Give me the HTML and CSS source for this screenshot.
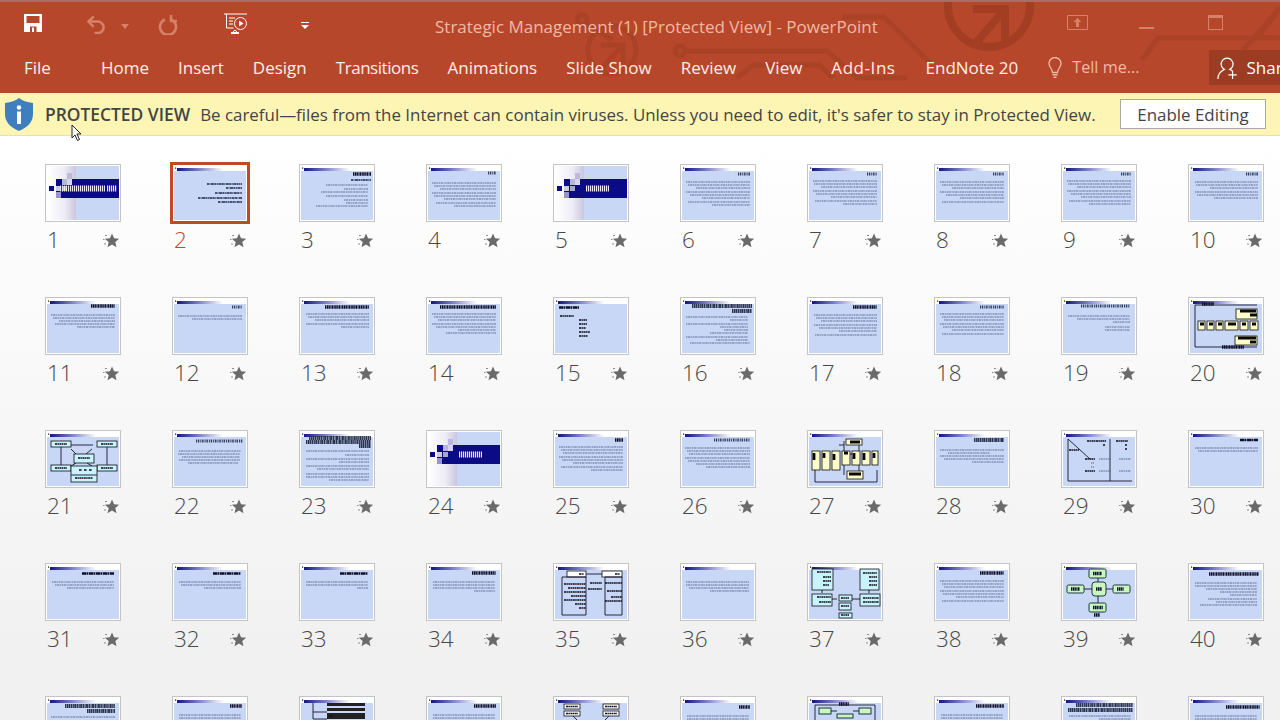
FILE: index.html
```html
<!DOCTYPE html>
<html lang="en">
<head>
<meta charset="utf-8">
<title>Strategic Management (1) [Protected View] - PowerPoint</title>
<link rel="stylesheet" href="styles.css">
</head>
<body>
<svg class="defs" width="0" height="0" aria-hidden="true">
  <defs>
    <linearGradient id="bar"><stop offset="0" stop-color="#14148a"/><stop offset=".42" stop-color="#6f73c0"/><stop offset="1" stop-color="#fff"/></linearGradient>
    <linearGradient id="side"><stop offset="0" stop-color="#fff"/><stop offset=".6" stop-color="#eeecf6"/><stop offset="1" stop-color="#c9c6de"/></linearGradient>
    <symbol id="bg" viewBox="0 0 72 54">
      <rect width="72" height="54" fill="#c9d7f6"/>
      <rect width="72" height="5" fill="#fff"/>
      <rect x="3" y="2" width="46" height="3" fill="url(#bar)"/>
      <rect x="1" y="1.500" width="1.200" height="1.200" fill="#112"/>
    </symbol>
    <symbol id="ts" viewBox="0 0 72 54">
      <rect width="72" height="54" fill="#c9d7f6"/>
      <rect width="29" height="54" fill="url(#side)"/>
      <rect x="9" y="13" width="63" height="19" fill="#0b0b86"/>
      <rect x="20" y="7" width="5" height="6" fill="#bdb8df"/>
      <rect x="15" y="13" width="5" height="6" fill="#b9b4dc"/>
      <rect x="20" y="13" width="5" height="6" fill="#d8d4ee"/>
      <rect x="2" y="20" width="5" height="5" fill="#0b0b86"/>
      <rect x="9" y="20" width="5" height="5" fill="#cfcae8"/>
      <rect x="15" y="20" width="5" height="5" fill="#a9a4d4"/>
      <rect x="9" y="26" width="5" height="6" fill="#9994cc"/>
    </symbol>
    <symbol id="star" viewBox="0 0 17 15">
      <path fill="#6a6a6a" d="M9 .4l2.050 4.750 5.150.5-3.900 3.450 1.200 5.050L9 11.500l-4.500 2.650 1.200-5.050-3.900-3.450 5.150-.5z"/>
      <path stroke="#8c8c8c" stroke-width="1" d="M2 2.500h2M0 6.500h1.500M1 11h2"/>
    </symbol>
  </defs>
</svg>
<div class="app">
  <header class="ribbon">
    <svg class="deco" viewBox="0 0 1280 93" aria-hidden="true">
      <circle cx="612" cy="50" r="24"/>
      <path d="M601 45h22v22M623 45l-22 24"/>
      <circle cx="582" cy="20" r="5"/>
      <path d="M586 24l26 16"/>
      <circle cx="680" cy="51" r="5"/>
      <path d="M685 51h142l30 27h50M737 78l16-13h67l13 13"/>
      <path d="M842 17h42l46 46"/>
      <circle class="big" cx="989" cy="6" r="41"/>
      <path class="big" d="M973 9h32v31M1005 9l-30 35"/>
      <path d="M1142 60l16-22h122M1243 50l37-42M1258 37l22-28"/>
    </svg>
    <div class="titlebar">
      <svg class="qat save" viewBox="0 0 20 20" aria-hidden="true"><path fill="#fff" d="M1 1h18v18H1z"/><path fill="#b7472a" d="M3.500 3h13v7h-13zM7 13.500h6.500V19H7z"/><path fill="#fff" d="M9 14.500h2V19H9z"/></svg>
      <svg class="qat undo" viewBox="0 0 22 20" aria-hidden="true"><path fill="none" stroke="#d58269" stroke-width="2.600" d="M8 2L2.500 7.500 8 13M3 7.500h9.500a6 6 0 0 1 0 12H9"/></svg>
      <svg class="qat caret" viewBox="0 0 8 5" aria-hidden="true"><path fill="#d58269" d="M0 0h8L4 5z"/></svg>
      <svg class="qat redo" viewBox="0 0 20 20" aria-hidden="true"><path fill="none" stroke="#d58269" stroke-width="2.600" d="M13 4.500a8 8 0 1 1-6 0M13 0v6h6"/></svg>
      <svg class="qat show" viewBox="0 0 24 22" aria-hidden="true"><g fill="none" stroke="#fff"><path d="M0 1h23M2.500 1v14h7M7 21l4-4 4 4M5 5h6M5 8h4M5 11h4"/><circle cx="16.500" cy="10.500" r="6"/></g><path fill="#fff" d="M15 7.500l4.500 3-4.500 3zM7 19h8v2H7z"/></svg>
      <svg class="qat more" viewBox="0 0 8 7" aria-hidden="true"><path fill="#fff" d="M0 0h8v1H0zM0 3h8L4 7z"/></svg>
      <div class="doc-title">Strategic Management (1) [Protected View] - PowerPoint</div>
      <svg class="win rdo" viewBox="0 0 21 15" aria-hidden="true"><path fill="none" stroke="#d58269" d="M.5.500h20v14H.5z"/><path fill="#d58269" d="M10.500 3l4 4H12v5H9V7H6.500z"/></svg>
      <div class="win minimize"></div>
      <div class="win restore"></div>
    </div>
    <nav class="tabs">
      <span class="tab file">File</span>
      <span class="tab">Home</span>
      <span class="tab">Insert</span>
      <span class="tab">Design</span>
      <span class="tab narrow">Transitions</span>
      <span class="tab">Animations</span>
      <span class="tab">Slide Show</span>
      <span class="tab">Review</span>
      <span class="tab">View</span>
      <span class="tab wide">Add-Ins</span>
      <span class="tab">EndNote 20</span>
      <svg class="bulb" viewBox="0 0 14 21" aria-hidden="true"><path fill="none" stroke="#f0b9a6" stroke-width="1.300" d="M4.500 15.500C4.500 11.500 1 10.500 1 6.500a6 6 0 0 1 12 0c0 4-3.500 5-3.500 9z"/><path fill="#f0b9a6" d="M4.500 17h5v1.500h-5zM5.500 19.500h3V21h-3z"/></svg>
      <span class="tell">Tell me...</span>
      <div class="share">
        <svg class="person" viewBox="0 0 24 24" aria-hidden="true"><path fill="none" stroke="#fff" stroke-width="1.300" d="M1 24c0-6 4-9 7-10.500a6.500 6.500 0 1 1 6 0c1 .4 2 1 3 2M17 15v9M12.500 19.500h9"/></svg>
        <span>Share</span>
      </div>
    </nav>
  </header>

  <section class="message">
    <svg class="shield" viewBox="0 0 28 33" aria-hidden="true"><path fill="#3f7fc0" d="M14 0c3 2.500 8 4.500 14 5v11c0 8-5 13-14 17C5 29 0 24 0 16V5c6-.5 11-2.500 14-5z"/><circle cx="14" cy="9.500" r="2.200" fill="#fff"/><path fill="#fff" d="M12 13.500h4V26h-4z"/></svg>
    <strong class="msg-head">PROTECTED VIEW</strong>
    <span class="msg-text">Be careful—files from the Internet can contain viruses. Unless you need to edit, it's safer to stay in Protected View.</span>
    <span class="enable">Enable Editing</span>
    <svg class="cursor" viewBox="0 0 12 18" aria-hidden="true"><path fill="#fff" stroke="#222" d="M1 1v13l3-3 2.500 5.500 2-1L6 10h4z"/></svg>
  </section>

  <main class="sorter">
    <!-- row 1 -->
    <div class="cell"><div class="thumb"><svg class="sl" viewBox="0 0 72 54"><use href="#ts"/><path class="w" d="M13 22.500h45M60 22.500h10"/></svg></div><div class="lab"><span class="num">1</span><svg class="star"><use href="#star"/></svg></div></div>
    <div class="cell sel"><div class="thumb"><svg class="sl" viewBox="0 0 72 54"><use href="#bg"/><path class="d" d="M33 18h35M52 22h16M41 27h27M24 32h44M44 36h24"/></svg></div><div class="lab"><span class="num">2</span><svg class="star"><use href="#star"/></svg></div></div>
    <div class="cell"><div class="thumb"><svg class="sl" viewBox="0 0 72 54"><use href="#bg"/><path class="t" d="M52 8h18"/><path class="d" d="M50 14h20"/><path class="b" d="M25 19h42M43 23h24M20 26h47M25 30h42M43 34h24M45 37h22M15 40h52"/></svg></div><div class="lab"><span class="num">3</span><svg class="star"><use href="#star"/></svg></div></div>
    <div class="cell"><div class="thumb"><svg class="sl" viewBox="0 0 72 54"><use href="#bg"/><path class="f" d="M60 7h8"/><path class="b" d="M4 17h64M6 20h62M12 23h56M4 27h64M6 30h62M16 33h52M8 37h60M26 40h42"/></svg></div><div class="lab"><span class="num">4</span><svg class="star"><use href="#star"/></svg></div></div>
    <div class="cell"><div class="thumb"><svg class="sl" viewBox="0 0 72 54"><use href="#ts"/><path class="w" d="M31 22.500h23"/></svg></div><div class="lab"><span class="num">5</span><svg class="star"><use href="#star"/></svg></div></div>
    <div class="cell"><div class="thumb"><svg class="sl" viewBox="0 0 72 54"><use href="#bg"/><path class="f" d="M56 8h12"/><path class="b" d="M4 16h64M6 19h62M14 22h54M4 26h64M8 29h60M20 32h48M6 36h62M30 39h38"/></svg></div><div class="lab"><span class="num">6</span><svg class="star"><use href="#star"/></svg></div></div>
    <div class="cell"><div class="thumb"><svg class="sl" viewBox="0 0 72 54"><use href="#bg"/><path class="f" d="M58 8h10"/><path class="b" d="M4 15h64M5 18h63M12 21h56M4 25h64M7 28h61M22 31h46M6 35h62M34 38h34"/></svg></div><div class="lab"><span class="num">7</span><svg class="star"><use href="#star"/></svg></div></div>
    <div class="cell"><div class="thumb"><svg class="sl" viewBox="0 0 72 54"><use href="#bg"/><path class="f" d="M57 8h11"/><path class="b" d="M4 16h64M6 19h62M16 22h52M4 26h64M10 29h58M24 32h44M6 36h62"/></svg></div><div class="lab"><span class="num">8</span><svg class="star"><use href="#star"/></svg></div></div>
    <div class="cell"><div class="thumb"><svg class="sl" viewBox="0 0 72 54"><use href="#bg"/><path class="f" d="M58 8h10"/><path class="b" d="M4 15h64M5 18h63M14 21h54M4 25h64M8 28h60M18 31h50M6 35h62M26 38h42"/></svg></div><div class="lab"><span class="num">9</span><svg class="star"><use href="#star"/></svg></div></div>
    <div class="cell"><div class="thumb"><svg class="sl" viewBox="0 0 72 54"><use href="#bg"/><path class="f" d="M56 8h12"/><path class="b" d="M5 16h63M6 19h62M20 22h48M5 26h63M7 29h61M24 32h44"/></svg></div><div class="lab"><span class="num">10</span><svg class="star"><use href="#star"/></svg></div></div>
    <!-- row 2 -->
    <div class="cell"><div class="thumb"><svg class="sl" viewBox="0 0 72 54"><use href="#bg"/><path class="t" d="M44 7h24"/><path class="b" d="M4 16h64M6 19h62M12 22h56M8 25h60M30 28h38"/></svg></div><div class="lab"><span class="num">11</span><svg class="star"><use href="#star"/></svg></div></div>
    <div class="cell"><div class="thumb"><svg class="sl" viewBox="0 0 72 54"><use href="#bg"/><path class="f" d="M58 8h10"/><path class="b" d="M4 17h64M18 20h50"/></svg></div><div class="lab"><span class="num">12</span><svg class="star"><use href="#star"/></svg></div></div>
    <div class="cell"><div class="thumb"><svg class="sl" viewBox="0 0 72 54"><use href="#bg"/><path class="t" d="M24 8h44"/><path class="b" d="M5 15h63M7 18h61M14 21h54M5 25h63M40 28h28"/></svg></div><div class="lab"><span class="num">13</span><svg class="star"><use href="#star"/></svg></div></div>
    <div class="cell"><div class="thumb"><svg class="sl" viewBox="0 0 72 54"><use href="#bg"/><path class="t" d="M12 8h56"/><path class="b" d="M4 15h64M6 18h62M10 21h58M4 25h64M8 28h60M30 31h38M18 34h50"/></svg></div><div class="lab"><span class="num">14</span><svg class="star"><use href="#star"/></svg></div></div>
    <div class="cell"><div class="thumb"><svg class="sl" viewBox="0 0 72 54"><use href="#bg"/><path class="t2" d="M4 8.500h20"/><path class="d2" d="M5 17h14M24 21h8M24 25h8M24 29h7M24 33h11M24 37h9"/></svg></div><div class="lab"><span class="num">15</span><svg class="star"><use href="#star"/></svg></div></div>
    <div class="cell"><div class="thumb"><svg class="sl" viewBox="0 0 72 54"><use href="#bg"/><path class="tc" d="M10 7h60M50 12h20"/><path class="b" d="M4 18h62M48 21h18M4 25h62M38 28h28M42 31h24M28 34h38M4 38h62M34 41h32M8 44h60"/></svg></div><div class="lab"><span class="num">16</span><svg class="star"><use href="#star"/></svg></div></div>
    <div class="cell"><div class="thumb"><svg class="sl" viewBox="0 0 72 54"><use href="#bg"/><path class="t" d="M44 8h24"/><path class="b" d="M5 16h63M7 19h61M12 22h56M5 26h63M10 29h58M30 32h38M6 36h62"/></svg></div><div class="lab"><span class="num">17</span><svg class="star"><use href="#star"/></svg></div></div>
    <div class="cell"><div class="thumb"><svg class="sl" viewBox="0 0 72 54"><use href="#bg"/><path class="f" d="M44 8h24"/><path class="b" d="M4 15h64M6 18h62M8 21h60M4 25h64M7 28h61M16 31h52M6 35h62"/></svg></div><div class="lab"><span class="num">18</span><svg class="star"><use href="#star"/></svg></div></div>
    <div class="cell"><div class="thumb"><svg class="sl" viewBox="0 0 72 54"><use href="#bg"/><path class="f" d="M18 7h49"/><path class="b" d="M5 17h62M14 20h53M50 23h17M42 28h25M42 31h25"/></svg></div><div class="lab"><span class="num">19</span><svg class="star"><use href="#star"/></svg></div></div>
    <div class="cell"><div class="thumb"><svg class="sl" viewBox="0 0 72 54"><use href="#bg"/><path class="k" d="M5 6v42h62M5 6h62"/><rect class="y" x="46" y="10" width="21" height="10"/><rect class="y" x="8" y="22" width="7" height="9"/><rect class="y" x="17" y="22" width="7" height="9"/><rect class="y" x="26" y="22" width="7" height="9"/><rect class="y" x="35" y="22" width="13" height="9"/><rect class="y" x="50" y="22" width="8" height="9"/><rect class="y" x="60" y="22" width="8" height="9"/><rect class="y" x="45" y="37" width="22" height="9"/><path class="t" d="M12 5h12M32 48h22"/><path class="d3" d="M50 12h16M60 16h7M10 25h4M19 25h4M28 25h4M38 25h8M52 25h4M62 25h4M48 39h18M60 43h6"/></svg></div><div class="lab"><span class="num">20</span><svg class="star"><use href="#star"/></svg></div></div>
    <!-- row 3 -->
    <div class="cell"><div class="thumb"><svg class="sl" viewBox="0 0 72 54"><use href="#bg"/><path class="k" d="M20 13h26M14 15v20M60 15v20M24 17l5 5M45 17l-6 5M24 34l5-3M45 34l-5-3"/><rect class="u" x="4" y="9" width="20" height="6"/><rect class="u" x="50" y="9" width="20" height="6"/><rect class="u" x="27" y="22" width="20" height="9"/><rect class="u" x="4" y="33" width="20" height="6"/><rect class="u" x="50" y="33" width="20" height="6"/><rect class="u" x="24" y="34" width="26" height="16"/><path class="k" d="M24 43h26"/><path class="d2" d="M8 12h12M54 12h12M31 26h12M8 36h12M54 36h12M32 38h3M37 38h3M42 38h3M28 46h18"/></svg></div><div class="lab"><span class="num">21</span><svg class="star"><use href="#star"/></svg></div></div>
    <div class="cell"><div class="thumb"><svg class="sl" viewBox="0 0 72 54"><use href="#bg"/><path class="f" d="M22 9h47"/><path class="b" d="M5 19h62M4 22h62M8 25h58M5 28h61M14 31h50"/></svg></div><div class="lab"><span class="num">22</span><svg class="star"><use href="#star"/></svg></div></div>
    <div class="cell"><div class="thumb"><svg class="sl" viewBox="0 0 72 54"><use href="#bg"/><path class="tc" d="M8 6h62M5 10h65M58 14h12"/><path class="b" d="M5 19h63M44 23h24M5 27h63M38 30h30M5 34h63M16 37h52M5 42h63M5 45h63M28 48h40"/></svg></div><div class="lab"><span class="num">23</span><svg class="star"><use href="#star"/></svg></div></div>
    <div class="cell"><div class="thumb"><svg class="sl" viewBox="0 0 72 54"><use href="#ts"/><path class="w" d="M31 22.500h23"/></svg></div><div class="lab"><span class="num">24</span><svg class="star"><use href="#star"/></svg></div></div>
    <div class="cell"><div class="thumb"><svg class="sl" viewBox="0 0 72 54"><use href="#bg"/><path class="t" d="M60 8h8"/><path class="b" d="M4 15h64M6 18h62M8 21h60M4 25h64M7 28h61M18 31h50M6 35h62M36 38h32"/></svg></div><div class="lab"><span class="num">25</span><svg class="star"><use href="#star"/></svg></div></div>
    <div class="cell"><div class="thumb"><svg class="sl" viewBox="0 0 72 54"><use href="#bg"/><path class="f" d="M32 8h36"/><path class="b" d="M3 16h65M5 19h63M7 22h61M3 26h65M6 29h62M14 32h54M24 35h44"/></svg></div><div class="lab"><span class="num">26</span><svg class="star"><use href="#star"/></svg></div></div>
    <div class="cell"><div class="thumb"><svg class="sl" viewBox="0 0 72 54"><use href="#bg"/><path class="k" d="M35 9v34M50 13v30M35 13h-5M6 38v12h62V38M45 22h-5"/><rect class="y" x="37" y="7" width="16" height="6"/><rect class="y" x="3" y="19" width="8" height="19"/><rect class="y" x="13" y="19" width="8" height="19"/><rect class="y" x="23" y="19" width="8" height="19"/><rect class="y" x="33" y="19" width="8" height="14"/><rect class="y" x="43" y="19" width="8" height="14"/><rect class="y" x="53" y="19" width="8" height="14"/><rect class="y" x="63" y="19" width="6" height="14"/><rect class="y" x="38" y="39" width="16" height="8"/><path class="d3" d="M5 21v7M15 21v5M25 22v6M35 21h4M45 21v6M55 21v7M65 21v5M40 42h12M41 10h10"/></svg></div><div class="lab"><span class="num">27</span><svg class="star"><use href="#star"/></svg></div></div>
    <div class="cell"><div class="thumb"><svg class="sl" viewBox="0 0 72 54"><use href="#bg"/><path class="tc" d="M38 8h30"/><path class="b" d="M4 18h64M12 21h42M4 24h64M8 27h60M36 30h32"/></svg></div><div class="lab"><span class="num">28</span><svg class="star"><use href="#star"/></svg></div></div>
    <div class="cell"><div class="thumb"><svg class="sl" viewBox="0 0 72 54"><use href="#bg"/><path class="k" d="M5 7v42h64M5 7l22 20M47 7v42"/><path class="d2" d="M24 9h10M33 9h10M53 9h12M6 18h10M22 27h10M22 39h10M40 13h2M62 13h2M62 17h2"/><path class="b" d="M36 27h12M56 27h12M36 39h12M56 39h12M28 31h3M28 35h3"/></svg></div><div class="lab"><span class="num">29</span><svg class="star"><use href="#star"/></svg></div></div>
    <div class="cell"><div class="thumb"><svg class="sl" viewBox="0 0 72 54"><use href="#bg"/><path class="t2" d="M50 8h18"/><path class="b" d="M5 16h63M8 19h60"/></svg></div><div class="lab"><span class="num">30</span><svg class="star"><use href="#star"/></svg></div></div>
    <!-- row 4 -->
    <div class="cell"><div class="thumb"><svg class="sl" viewBox="0 0 72 54"><use href="#bg"/><path class="t2" d="M35 8.500h32"/><path class="b" d="M5 17h62M8 20h59M20 23h47"/></svg></div><div class="lab"><span class="num">31</span><svg class="star"><use href="#star"/></svg></div></div>
    <div class="cell"><div class="thumb"><svg class="sl" viewBox="0 0 72 54"><use href="#bg"/><path class="t2" d="M39 8.500h28"/><path class="b" d="M5 17h62M7 20h60M30 23h37"/></svg></div><div class="lab"><span class="num">32</span><svg class="star"><use href="#star"/></svg></div></div>
    <div class="cell"><div class="thumb"><svg class="sl" viewBox="0 0 72 54"><use href="#bg"/><path class="t2" d="M39 8.500h28"/><path class="b" d="M5 17h62M5 20h62M56 23h11"/></svg></div><div class="lab"><span class="num">33</span><svg class="star"><use href="#star"/></svg></div></div>
    <div class="cell"><div class="thumb"><svg class="sl" viewBox="0 0 72 54"><use href="#bg"/><path class="t" d="M44 8h24"/><path class="b" d="M5 17h62M5 20h62M5 23h62M46 26h21"/></svg></div><div class="lab"><span class="num">34</span><svg class="star"><use href="#star"/></svg></div></div>
    <div class="cell"><div class="thumb"><svg class="sl" viewBox="0 0 72 54"><use href="#bg"/><rect class="w1" x="12" y="6" width="19" height="6"/><rect class="w1" x="47" y="6" width="20" height="6"/><path class="k" d="M31 9h16M7 12h24v38H7zM50 12h17v38H50z"/><path class="d2" d="M24 9h5M60 9h5M9 19h22M13 23h18M9 27h22M16 31h15M9 35h22M20 39h11M24 43h7M50 18h17M35 18h12M33 24h14M52 26h15M56 32h11M50 36h17"/></svg></div><div class="lab"><span class="num">35</span><svg class="star"><use href="#star"/></svg></div></div>
    <div class="cell"><div class="thumb"><svg class="sl" viewBox="0 0 72 54"><use href="#bg"/><path class="b" d="M4 17h63M4 20h63M7 23h60M28 26h39"/></svg></div><div class="lab"><span class="num">36</span><svg class="star"><use href="#star"/></svg></div></div>
    <div class="cell"><div class="thumb"><svg class="sl" viewBox="0 0 72 54"><use href="#bg"/><path class="k" d="M13 25v3M60 25v3M23 34h5M43 34h9M37 40v4"/><rect class="u" x="3" y="4" width="21" height="21"/><rect class="u" x="51" y="4" width="19" height="21"/><rect class="u" x="3" y="29" width="20" height="12"/><rect class="u" x="51" y="29" width="20" height="12"/><rect class="u" x="30" y="30" width="13" height="6"/><rect class="u" x="30" y="38" width="12" height="7"/><rect class="u" x="30" y="48" width="13" height="5"/><path class="d2" d="M8 7h14M14 12h8M14 16h8M14 20h6M54 8h14M60 12h8M60 16h8M60 20h8M8 32h14M10 37h12M54 33h16M54 37h16M32 33h8M32 41h8M32 50h8"/></svg></div><div class="lab"><span class="num">37</span><svg class="star"><use href="#star"/></svg></div></div>
    <div class="cell"><div class="thumb"><svg class="sl" viewBox="0 0 72 54"><use href="#bg"/><path class="t" d="M44 8h24"/><path class="b" d="M4 16h64M6 19h62M8 22h60M4 26h64M7 29h61M20 32h48M6 36h62"/></svg></div><div class="lab"><span class="num">38</span><svg class="star"><use href="#star"/></svg></div></div>
    <div class="cell"><div class="thumb"><svg class="sl" viewBox="0 0 72 54"><use href="#bg"/><path class="k" d="M35 13v30M17 24h50"/><rect class="gr" x="26" y="4" width="17" height="9" rx="1.500"/><rect class="gr" x="4" y="20" width="17" height="8" rx="1.500"/><rect class="gr" x="29" y="17" width="14" height="14" rx="3"/><rect class="gr" x="50" y="20" width="17" height="8" rx="1.500"/><rect class="gr" x="26" y="38" width="17" height="9" rx="1.500"/><path class="t" d="M30 8.500h9M8 24h9M33 24h6M54 24h7M30 42.500h10M31 50h6"/></svg></div><div class="lab"><span class="num">39</span><svg class="star"><use href="#star"/></svg></div></div>
    <div class="cell"><div class="thumb"><svg class="sl" viewBox="0 0 72 54"><use href="#bg"/><path class="t" d="M19 9h50"/><path class="b" d="M5 18h62M5 21h62M16 24h51M30 27h37M40 30h27M18 34h49M26 37h41M10 40h57"/></svg></div><div class="lab"><span class="num">40</span><svg class="star"><use href="#star"/></svg></div></div>
    <!-- row 5 -->
    <div class="cell"><div class="thumb"><svg class="sl" viewBox="0 0 72 54"><use href="#bg"/><path class="tc" d="M18 8h50M40 13h28"/><path class="b" d="M4 19h64"/></svg></div><div class="lab"><span class="num">41</span><svg class="star"><use href="#star"/></svg></div></div>
    <div class="cell"><div class="thumb"><svg class="sl" viewBox="0 0 72 54"><use href="#bg"/><path class="t" d="M56 8h12"/><path class="b" d="M5 17h62M5 20h62"/></svg></div><div class="lab"><span class="num">42</span><svg class="star"><use href="#star"/></svg></div></div>
    <div class="cell"><div class="thumb"><svg class="sl" viewBox="0 0 72 54"><use href="#bg"/><path class="k" d="M12 5v16h14M12 14h14"/><rect class="li" x="26" y="5" width="38" height="3"/><rect class="li" x="26" y="10" width="38" height="3"/><rect class="li" x="26" y="15" width="38" height="6"/><path class="d2" d="M28 18h4"/></svg></div><div class="lab"><span class="num">43</span><svg class="star"><use href="#star"/></svg></div></div>
    <div class="cell"><div class="thumb"><svg class="sl" viewBox="0 0 72 54"><use href="#bg"/><path class="t" d="M46 8h22"/><path class="b" d="M5 17h62M5 20h62"/></svg></div><div class="lab"><span class="num">44</span><svg class="star"><use href="#star"/></svg></div></div>
    <div class="cell"><div class="thumb"><svg class="sl" viewBox="0 0 72 54"><use href="#bg"/><rect class="w1" x="9" y="6" width="16" height="5"/><rect class="w1" x="48" y="6" width="16" height="5"/><rect class="w1" x="9" y="13" width="16" height="5"/><rect class="w1" x="48" y="13" width="16" height="5"/><path class="k" d="M18 18l4 4M54 18l-4 4"/><path class="d2" d="M11 8.500h12M50 8.500h12M11 15.500h12M50 15.500h12"/></svg></div><div class="lab"><span class="num">45</span><svg class="star"><use href="#star"/></svg></div></div>
    <div class="cell"><div class="thumb"><svg class="sl" viewBox="0 0 72 54"><use href="#bg"/><path class="t" d="M57 9h11"/><path class="b" d="M5 18h62M5 21h62"/></svg></div><div class="lab"><span class="num">46</span><svg class="star"><use href="#star"/></svg></div></div>
    <div class="cell"><div class="thumb"><svg class="sl" viewBox="0 0 72 54"><use href="#bg"/><path class="k" d="M6 7h60v16M6 7v16M22 13h6M44 13h6"/><rect class="gr" x="10" y="10" width="12" height="6"/><rect class="gr" x="50" y="10" width="12" height="6"/><rect class="gr" x="28" y="16" width="16" height="4"/><path class="t" d="M30 6h10"/></svg></div><div class="lab"><span class="num">47</span><svg class="star"><use href="#star"/></svg></div></div>
    <div class="cell"><div class="thumb"><svg class="sl" viewBox="0 0 72 54"><use href="#bg"/><path class="t" d="M40 8h28"/><path class="b" d="M5 17h62M5 20h62"/></svg></div><div class="lab"><span class="num">48</span><svg class="star"><use href="#star"/></svg></div></div>
    <div class="cell"><div class="thumb"><svg class="sl" viewBox="0 0 72 54"><use href="#bg"/><path class="tc" d="M13 7h57M5 12h65"/><path class="b" d="M6 18h62M36 21h32"/></svg></div><div class="lab"><span class="num">49</span><svg class="star"><use href="#star"/></svg></div></div>
    <div class="cell"><div class="thumb"><svg class="sl" viewBox="0 0 72 54"><use href="#bg"/><path class="t" d="M36 9h34"/><path class="b" d="M5 18h62M5 21h62"/></svg></div><div class="lab"><span class="num">50</span><svg class="star"><use href="#star"/></svg></div></div>
  </main>
</div>
</body>
</html>
```
FILE: styles.css
```css
* { box-sizing: border-box; }
html, body { margin: 0; padding: 0; }
body { font-family: "Open Sans", "Noto Sans", "Liberation Sans", sans-serif; background: #fff; }
.defs { position: absolute; }
.app { width: 1280px; height: 720px; overflow: hidden; display: flex; flex-direction: column; }

/* ribbon */
.ribbon { position: relative; height: 93px; flex: none; background: #b7472a; border-top: 2px solid #a5705f; overflow: hidden; color: #fff; }
.deco { position: absolute; left: 0; top: -2px; width: 1280px; height: 93px; fill: none; stroke: #aa4226; stroke-width: 5; }
.deco .big { stroke-width: 8; stroke: #a43e23; }
.titlebar { position: relative; height: 48px; display: flex; align-items: center; }
.qat { flex: none; display: block; }
.save { width: 20px; height: 20px; margin: -6px 0 0 23px; }
.undo { width: 21px; height: 20px; margin: -4px 0 0 43px; }
.caret { width: 8px; height: 5px; margin: 0 0 0 14px; }
.redo { width: 20px; height: 20px; margin: -3px 0 0 29px; }
.show { width: 24px; height: 22px; margin: -5px 0 0 46px; }
.more { width: 8px; height: 7px; margin: -2px 0 0 53px; }
.doc-title { width: 441px; margin: 0 0 0 126px; font-size: 17px; white-space: nowrap; color: #f0b9a6; text-align: center; }
.win { flex: none; }
.rdo { width: 21px; height: 15px; margin: -7px 0 0 191px; }
.minimize { width: 15px; height: 2px; margin: 4px 0 0 51px; background: #d58269; }
.restore { width: 15px; height: 15px; margin: -7px 0 0 54px; border: 1px solid #d58269; border-top-width: 3px; }

.tabs { position: relative; height: 36px; padding-bottom: 2px; display: flex; align-items: center; }
.tab { font-size: 17px; color: #fdeee9; white-space: nowrap; margin-left: 29px; }
.narrow { letter-spacing: -.45px; }
.wide { letter-spacing: .55px; margin-right: 1px; }
.file { margin-left: 24px; margin-right: 21px; }
.bulb { width: 14px; height: 21px; margin-left: 30px; flex: none; }
.tell { font-size: 16.200px; color: #f0b9a6; margin-left: 10px; white-space: nowrap; }
.share { margin-left: 69px; width: 71px; height: 35px; flex: none; align-self: flex-start; background: #9c3c22; display: flex; align-items: center; padding-left: 8px; overflow: hidden; font-size: 17px; }
.person { width: 22px; height: 24px; flex: none; margin-right: 8px; }

/* message bar */
.message { position: relative; height: 43px; flex: none; background: #fcf5b4; border-bottom: 1px solid #e5e2a8; display: flex; align-items: center; color: #444; font-size: 16.920px; white-space: nowrap; }
.shield { width: 28px; height: 33px; margin-left: 5px; flex: none; }
.msg-head { margin-left: 12px; font-weight: 600; font-size: 17.400px; }
.msg-text { margin-left: 10px; }
.enable { position: absolute; left: 1120px; top: 6px; width: 146px; height: 30px; background: #fff; border: 1px solid #a9a9a9; display: flex; align-items: center; justify-content: center; }
.cursor { position: absolute; left: 71px; top: 31px; width: 12px; height: 18px; }

/* slide sorter */
.sorter { flex: 1; min-height: 0; padding: 28px 0 0 45px; background: linear-gradient(#fff, #f1f1f1 510px); display: grid; grid-template-columns: repeat(10, 76px); column-gap: 51px; grid-auto-rows: 133px; overflow: hidden; }
.cell { width: 76px; }
.thumb { width: 76px; height: 58px; border: 1px solid #c4c4c4; background: #fff; padding: 1px; }
.sel .thumb { outline: 3px solid #c0482b; outline-offset: -1px; }
.sl { display: block; width: 72px; height: 54px; filter: blur(.4px); }
.lab { display: flex; justify-content: space-between; align-items: center; height: 36px; padding: 0 1px 0 2px; }
.num { font-size: 22.500px; font-weight: 300; color: #484848; line-height: 36px; }
.sel .num { color: #c0482b; }
.star { width: 17px; height: 15px; }

/* thumbnail marks */
.sl path { fill: none; }
.b { stroke: #626f98; stroke-width: 1.200; stroke-dasharray: 1.500 .5 2.500 .6 1 .5; }
.d { stroke: #20264f; stroke-width: 1.700; stroke-dasharray: 2 .5 1 .5 3 .4; }
.d2 { stroke: #0e0e18; stroke-width: 1.500; stroke-dasharray: 2 .4 1.500 .5; }
.d3 { stroke: #0a0a0a; stroke-width: 2.800; }
.t { stroke: #10102a; stroke-width: 3.400; stroke-dasharray: 1.500 .5 1 .4; }
.t2 { stroke: #10102a; stroke-width: 2.400; stroke-dasharray: 4 .4 2 .6; }
.f { stroke: #343e62; stroke-width: 3.200; stroke-dasharray: 1 .8 1.500 1; }
.tc { stroke: #2c3450; stroke-width: 4.200; stroke-dasharray: 1.500 .5 1 .4 2 .5; }
.w { stroke: #ece6f2; stroke-width: 6; stroke-dasharray: 1.200 .8; }
.k { stroke: #14142c; stroke-width: .9; }
.y { fill: #fdfcc8; stroke: #111; stroke-width: .8; }
.u { fill: #c8f2fc; stroke: #111; stroke-width: .8; }
.gr { fill: #c8f8c0; stroke: #123; stroke-width: .9; }
.w1 { fill: #fff; stroke: #111; stroke-width: .8; }
.li { fill: #222; }
```
